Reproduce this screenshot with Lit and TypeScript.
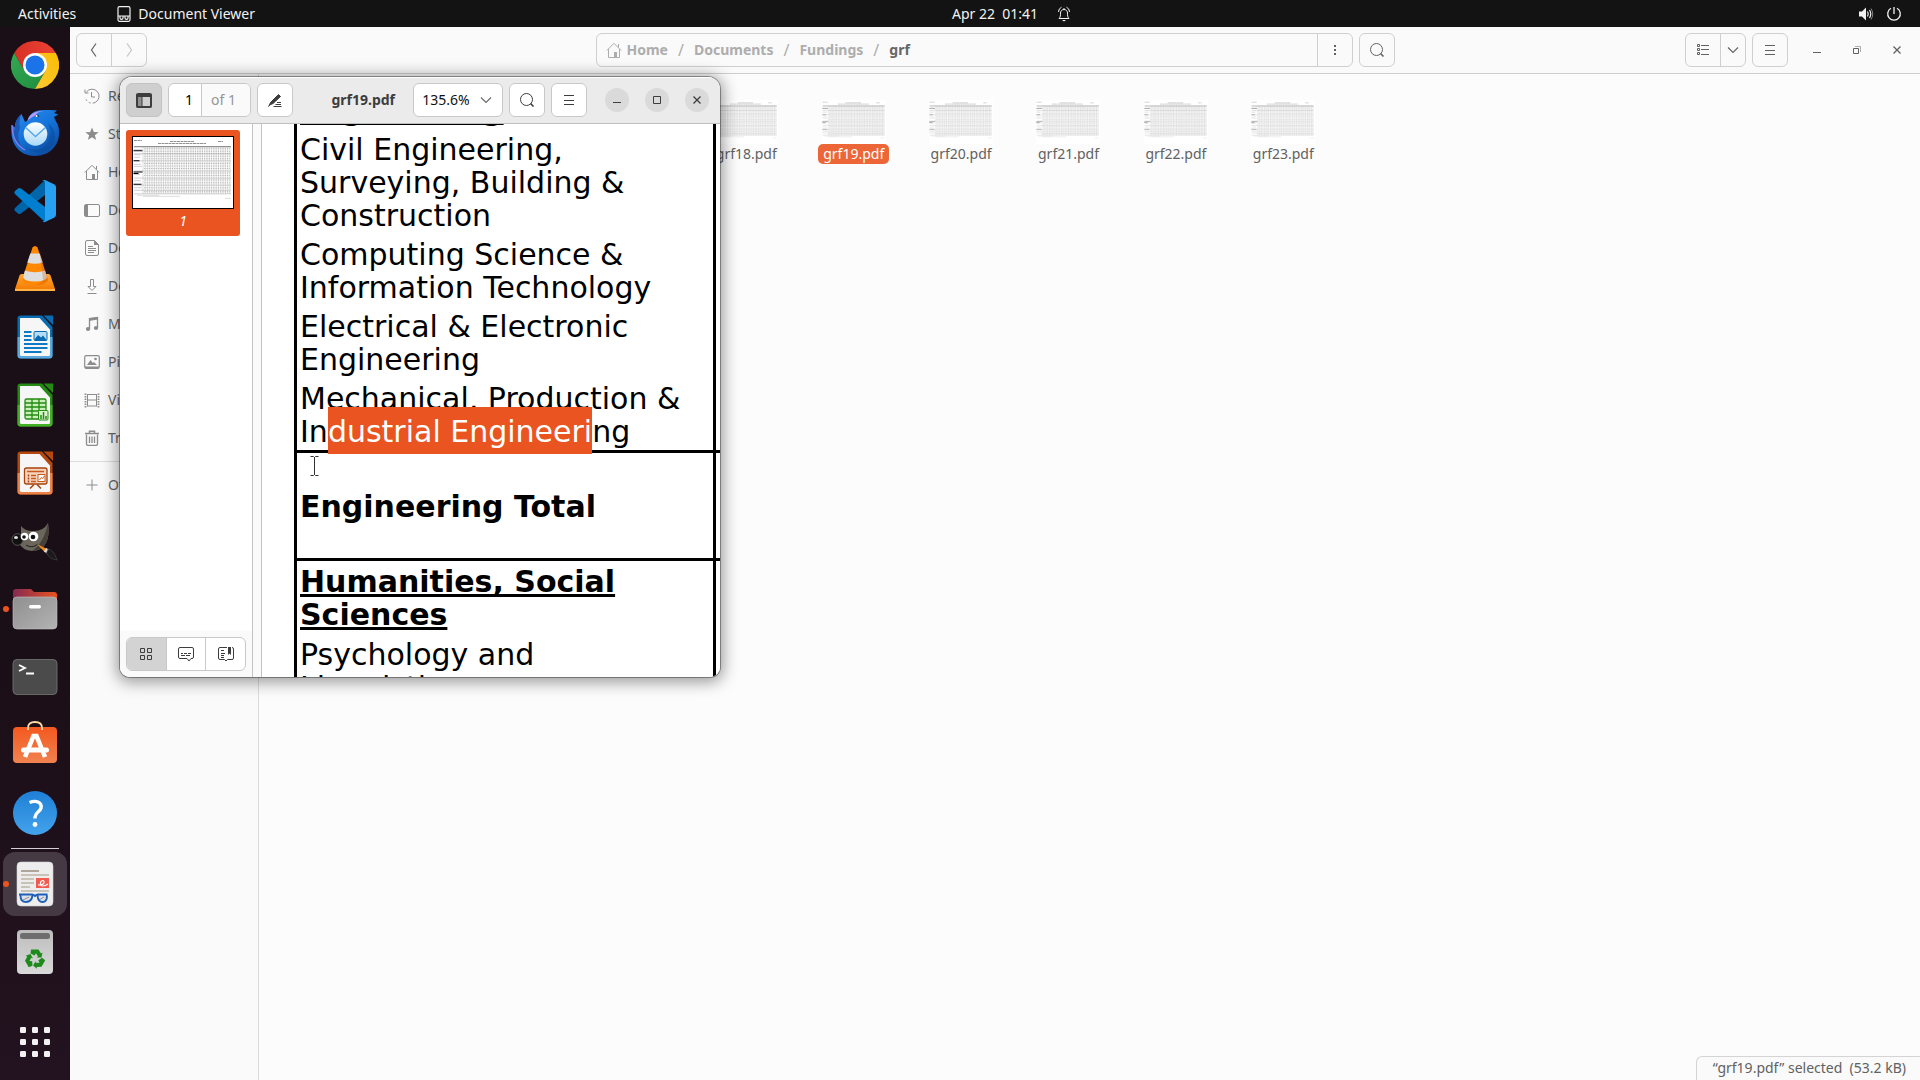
import { LitElement, html, css, svg, nothing, type TemplateResult } from "lit";
import { customElement, state } from "lit/decorators.js";
import { classMap } from "lit/directives/class-map.js";

/* ---------- small symbolic icons, drawn on a 16px grid ---------- */

const glyph = (body: TemplateResult, size = 16) => html`<svg
  class="glyph"
  width=${size}
  height=${size}
  viewBox="0 0 16 16"
  fill="none"
  stroke="currentColor"
  aria-hidden="true"
>${body}</svg>`;

const icons = {
  back: svg`<path d="M10 1.5L5.5 8l4.5 6.5" stroke-width="1.2"/>`,
  forward: svg`<path d="M6 1.5L10.5 8 6 14.5" stroke-width="1.2"/>`,
  down: svg`<path d="M3 5.5l5 5 5-5" stroke-width="1.1"/>`,
  search: svg`<circle cx="7.5" cy="7.5" r="6"/><path d="M11.5 11.5l3 3" stroke-width="1.6"/>`,
  menu: svg`<path d="M3 3.5h10M3 8.5h10M3 12.5h10"/>`,
  dots: svg`<path d="M8 3v2M8 7v2M8 11v2" stroke-width="2"/>`,
  list: svg`<path d="M2.500 2.500h2v2h-2zM2.500 6.500h2v2h-2zM2.500 10.500h2v2h-2zM6 3.500h8M6 7.500h8M6 12.500h8"/>`,
  minimize: svg`<path d="M4 10.5h8"/>`,
  maximize: svg`<path d="M4.5 4.5h7v7h-7z"/>`,
  restore: svg`<path d="M4.5 6.5h5v5h-5z"/><path d="M6 4.5h5.5V10" opacity=".5"/>`,
  close: svg`<path d="M4.5 4.5l7 7M11.5 4.5l-7 7" stroke-width="1.3"/>`,
  recent: svg`<path d="M2.3 4.2a7 7 0 1 1-1.1 5.3" stroke-dasharray="28 2 2 2 2 2"/><path d="M1 1.5v3.5h3.5M7.500 4v5h3.5"/>`,
  star: svg`<path d="M8 1.5l1.8 4.6 4.9.2-3.9 3 1.4 4.7L8 11.3 3.8 14l1.4-4.7-3.9-3 4.9-.2z" fill="currentColor" stroke="none"/>`,
  home: svg`<path d="M.8 8.5L8 1.3l7.2 7.2M2.5 7v8.5h11V7M12.5 2v3.5"/><path d="M8 10h3v5H8z" fill="currentColor" stroke="none"/>`,
  desktop: svg`<rect x=".5" y="2.5" width="15" height="12" rx="1.5"/><path d="M1 3h3v11H1z" fill="currentColor" stroke="none"/>`,
  document: svg`<path d="M3 .5h7.5l4 4v9.5a1.5 1.5 0 0 1-1.5 1.5H3A1.5 1.5 0 0 1 1.5 14V2A1.5 1.5 0 0 1 3 .5z"/><path d="M10 0v5h5z" fill="currentColor" stroke="none"/><path d="M4 6.5h5M4 8.5h8M4 10.5h8M4 12.5h6"/>`,
  download: svg`<path d="M6.5 1.5h3v7h2.5l-4 4-4-4h2.5zM3.500 15.500h9"/>`,
  music: svg`<path d="M5.5 13V2.500l8-1V12" stroke-width="1.3"/><path d="M5 2.5l9-1.5v2.5L5 5z" fill="currentColor" stroke="none"/><ellipse cx="4" cy="13" rx="2.2" ry="1.9" fill="currentColor" stroke="none"/><ellipse cx="12" cy="12" rx="2.2" ry="1.9" fill="currentColor" stroke="none"/>`,
  picture: svg`<rect x=".7" y="1.7" width="14.6" height="12.6" rx="1.5" stroke-width="1.2"/><path d="M3 11l3.5-5L9 9l1-1 3 3z" fill="currentColor" stroke="none"/><circle cx="11.5" cy="5" r="1.3" fill="currentColor" stroke="none"/><path d="M1 13.5h14" stroke-width="2"/>`,
  video: svg`<path d="M3.5 2v12.5M12.5 2v12.5M3.5 2.5h9M3.5 8h9M3.5 14h9"/><path d="M1.5 1.5v14M14.5 1.5v14" stroke-width="1.8" stroke-dasharray="1.5 1"/>`,
  trash: svg`<path d="M2.5 4.5v9.5a1.5 1.5 0 0 0 1.5 1.5h8a1.5 1.5 0 0 0 1.5-1.5V4.500M5.500 6.500v6.500M8 6.500v6.500M10.500 6.500v6.500" stroke-width="1.3"/><path d="M1 3.5h14M5.5 3V1.200h5V3" stroke-width="1.5"/>`,
  plus: svg`<path d="M8 2.5v11M2.5 8h11"/>`,
  pane: svg`<path d="M.5 2h15v13.500H.5z" fill="#3d3d3d" stroke="none"/><path d="M2 5h3.500v9H2z" fill="#909090" stroke="none"/><path d="M6.500 5H14v9H6.500z" fill="#d0d0d0" stroke="none"/><path d="M.5 2.500a1 1 0 0 1 1-1h13a1 1 0 0 1 1 1v12a1 1 0 0 1-1 1h-13a1 1 0 0 1-1-1z"/>`,
  annotate: svg`<path d="M3.500 10.500L11.500 2.500l2 2L6 11.500l-3.500 1.500z" fill="currentColor"/><path d="M1 14.500l2-1.500M10 10.500h4M8.500 12.500h5.500M6.500 14.500h8"/>`,
  tiles: svg`<path d="M2.500 2.500h4v4h-4zM9.500 2.500h4v4h-4zM2.500 9.500h4v4h-4zM9.500 9.500h4v4h-4z"/>`,
  note: svg`<path d="M2 1.500h12A1.500 1.500 0 0 1 15.500 3v8a1.500 1.500 0 0 1-1.500 1.500h-1L11 15l-2-2.500H2A1.500 1.500 0 0 1 .500 11V3A1.500 1.500 0 0 1 2 1.500zM3 7.500h2M6 7.500h3M10 7.500h3M3 9.500h4M8 9.500h4"/>`,
  bookmark: svg`<path d="M9 1.500H2A1.500 1.500 0 0 0 .500 3v9A1.500 1.500 0 0 0 2 13.500h4.500L8 15l1.500-1.500H14a1.500 1.500 0 0 0 1.500-1.500V3A1.500 1.500 0 0 0 14 1.500M3 4.500h3M3 7.500h4M3 9.500h3M3 11.500h3"/><path d="M10 1h3v8l-1.500-1.500L10 9z" fill="currentColor" stroke="none"/>`,
  viewer: svg`<rect x="2" y=".7" width="12" height="14.600" rx="1.500" stroke-width="1.200"/><path d="M2 10h12M4 10.500v1.500q0 1.300 1.500 1.300t1.500-1.300v-1.500M9 10.500v1.500q0 1.300 1.500 1.300T12 12v-1.500" stroke-width="1.200"/>`,
  bell: svg`<path d="M3 12.500c1.500-1.500 1.500-3 1.500-5.500 0-2 1.500-3.500 3.500-3.500s3.500 1.500 3.500 3.500c0 2.500 0 4 1.500 5.500zM2.500 6q0-3.500 3-4.800M13.500 6q0-3.500-3-4.800M8 3.500V2"/><path d="M6 14h4l-2 1.500z" fill="currentColor" stroke="none"/>`,
  volume: svg`<path d="M1 5.500h3L8 1.500v13l-4-4H1z" fill="currentColor" stroke="none"/><path d="M9.500 5.500q1.500 2.500 0 5M11.500 4q2.500 4 0 8" stroke-width="1.200"/><path d="M13 2.500q3.500 5.500 0 11" opacity=".5"/>`,
  power: svg`<path d="M5 2.300a6.300 6.300 0 1 0 6 0M8 1v7" stroke-width="1.300"/>`,
};

/* ---------- full-colour launcher icons, drawn on a 48px grid ---------- */

const officeDoc = (light: string, dark: string, art: TemplateResult) => svg`
  <path d="M9.500 2.500H31L41.500 14v28.500a3 3 0 0 1-3 3h-29a3 3 0 0 1-3-3v-37a3 3 0 0 1 3-3z" fill="${dark}"/>
  <path d="M6.500 24h35v18.500a3 3 0 0 1-3 3h-29a3 3 0 0 1-3-3z" fill="${light}"/>
  <path d="M9.500 5h19L39 16.500v25a1.500 1.500 0 0 1-1.500 1.500h-27A1.500 1.500 0 0 1 9 41.500v-36z" fill="#f6f6f6"/>
  <path d="M32.500 2.500h9.500v9.500z" fill="${dark}"/>
  ${art}`;

const launcherArt: Record<string, TemplateResult> = {
  chrome: svg`
    <defs>
      <linearGradient id="cr" x1="0" x2="1"><stop offset="0" stop-color="#d93025"/><stop offset="1" stop-color="#ea4335"/></linearGradient>
      <linearGradient id="cg" x1="0" y1="0" x2="1" y2="1"><stop offset="0" stop-color="#34a853"/><stop offset="1" stop-color="#1e8e3e"/></linearGradient>
      <linearGradient id="cy" x1="1" y1="0" x2="0" y2="1"><stop offset="0" stop-color="#fbbc04"/><stop offset="1" stop-color="#fcc934"/></linearGradient>
    </defs>
    <path d="M24 12H44.800A24 24 0 0 0 3.200 12L13.600 30z" fill="url(#cr)"/>
    <path d="M34.400 30L24 48A24 24 0 0 1 3.200 12L13.600 30 24 36z" fill="url(#cg)"/>
    <path d="M34.400 30L24 12h20.800A24 24 0 0 1 24 48z" fill="url(#cy)"/>
    <circle cx="24" cy="24" r="12" fill="#fff"/><circle cx="24" cy="24" r="9.500" fill="#1a73e8"/>`,
  thunderbird: svg`
    <defs>
      <linearGradient id="tb" x1="0" y1="0" x2=".6" y2="1"><stop offset="0" stop-color="#2f8df0"/><stop offset=".55" stop-color="#1373d9"/><stop offset="1" stop-color="#0d4fa5"/></linearGradient>
      <linearGradient id="te" x1="0" y1="0" x2="0" y2="1"><stop offset="0" stop-color="#fff"/><stop offset="1" stop-color="#a9d8f8"/></linearGradient>
    </defs>
    <path d="M10.500 5C6 9 3.500 14 4 18.500L1 16C-2 33 7 47 24 47c15 0 25-11 24-25-.3-4-1-7-3-9.500L43 8l4.500-2.500L43 4l3-2.500C40 .5 36 1 32 1 24 1 18 5 16.500 11.500L14 13C13 10 11.500 8 10.500 5z" fill="url(#tb)"/>
    <path d="M10.500 5C8 10 8 15 9 19c-3 6-2 15 3 20-9-4-11-13-8-20C4 13 6 8.500 10.500 5z" fill="#1b57b5"/>
    <path d="M1 16c0 11 4 20 13 25" fill="none" stroke="#8c7de8" stroke-width="1.300"/>
    <path d="M16.500 12C18 5 25 1.500 32 2c-6 1-7 3-7 5-3 0-6 2-8.500 5z" fill="#b79af5"/>
    <path d="M13 36c5 6 17 6 22 0s6-15 2-22c8 6 9 17 3 24s-20 8-27-2z" fill="#0a4c9f" opacity=".55"/>
    <circle cx="24.500" cy="25" r="11.800" fill="url(#te)"/>
    <path d="M14.500 18.500l10 9 10-9" fill="none" stroke="#5aa8e8" stroke-width="1.500"/>
    <path d="M24 7.500q2-2 4 0" fill="none" stroke="#0a3c80" stroke-width="1.200"/><circle cx="25.500" cy="7" r="1" fill="#fff"/>`,
  code: svg`
    <path d="M34 3L4 31q-1.500 1.500 0 3l3 2.500q1.300 1 3 0L34 18z" fill="#0065a9"/>
    <path d="M34 45L4 17q-1.500-1.500 0-3l3-2.500q1.300-1 3 0L34 30z" fill="#007fd0"/>
    <path d="M34 3l9 4.300q2 1 2 3v27.400q0 2-2 3L34 45q-1 .5-3-1 3 1 3-1.500V5.500Q34 3 31 4q2-1.500 3-1z" fill="#26a1f4"/>`,
  vlc: svg`
    <defs><linearGradient id="vb" x1="0" y1="0" x2="0" y2="1"><stop offset="0" stop-color="#ffa733"/><stop offset="1" stop-color="#f57900"/></linearGradient></defs>
    <path d="M10.500 29h27q1.500 0 2 1.500L44 44q.3 2-1.500 2h-37Q3.700 46 4 44l4.500-13.500Q9 29 10.500 29z" fill="url(#vb)"/>
    <path d="M4 44h40v2H4z" fill="#ffb347"/>
    <path d="M21.500 2.500Q24-.5 26.500 2.500L37 35q-2 5-13 5T11 35z" fill="#ff8800"/>
    <path d="M19.300 8.500h9.400l3 9q-7.700 2.500-15.400 0zM14 25.500q10 3.500 20 0l2 7q-2 4-12 4t-12-4z" fill="#dedede"/>
    <path d="M28 3l9 32q-2 5-13 5 8-2 8-6z" fill="#b34700" opacity=".25"/>`,
  writer: officeDoc("#5aa9dc", "#0a6cb0", svg`
    <path d="M13 19h7.500M13 23h7.500M13 27h7.500M13 31h23.500M13 35h23.500M13 39h17.500" stroke="#0a7bc4" stroke-width="1.800"/>
    <rect x="23" y="18.500" width="13" height="9" rx="1" fill="#b5dcf5" stroke="#0a6cb0"/><path d="M23 27l4-5 3 2.500 2-2 4 5z" fill="#0a6cb0"/>`),
  calc: officeDoc("#43b028", "#238a12", svg`
    <rect x="14" y="18" width="21" height="20" rx="1.500" fill="#c8f0b8" stroke="#238a12" stroke-width="1.300"/>
    <path d="M14 22h21M14 26h21M14 30h21M14 34h21M21 18v20M28 18v20" stroke="#238a12" stroke-width="1.300"/>
    <rect x="27.500" y="29.500" width="9.500" height="9.500" rx="1" fill="#d8f5cc" stroke="#238a12"/><path d="M30 38v-4M32.500 38v-7M35 38v-3" stroke="#238a12" stroke-width="1.500"/>`),
  impress: officeDoc("#ec8149", "#b4480f", svg`
    <rect x="13.500" y="19" width="22.500" height="16" rx="2" fill="#f8d4bf" stroke="#a8430f" stroke-width="1.300"/>
    <path d="M16 22.500h17M20 26.500h5M20 29.500h5M20 32.500h5" stroke="#c65a1c" stroke-width="1.500"/><path d="M17.500 25.500v8" stroke="#a8430f" stroke-width="1.500" stroke-dasharray="2 1"/>
    <rect x="27" y="25.500" width="7" height="7" fill="#fff" stroke="#c65a1c"/><path d="M28.500 31l2-2.500 1 1 2-2.500" fill="none" stroke="#c65a1c"/>
    <path d="M19 39.500l4-4M30 39.500l-4-4" stroke="#a8430f" stroke-width="1.500"/>`),
  gimp: svg`
    <path d="M10 9q4 5 11 5 11 1 16-8 2 12-2 20-4 8-14 8-10-1-13-8 1-2 2-7z" fill="#6b665c"/>
    <path d="M37 6q2 12-2 20-4 8-14 8 12-8 16-28z" fill="#45413a"/>
    <ellipse cx="6.500" cy="22.500" rx="5.500" ry="5.800" fill="#111" stroke="#555"/><ellipse cx="5" cy="20.500" rx="2" ry="1.500" fill="#ddd"/>
    <circle cx="13.500" cy="19.500" r="3.800" fill="#fff"/><circle cx="22.500" cy="19.500" r="4.800" fill="#fff"/><circle cx="13" cy="20" r="1.800" fill="#111"/><circle cx="22" cy="20" r="2.300" fill="#111"/>
    <path d="M15 28q6 4 12-1" fill="none" stroke="#222"/>
    <path d="M26 27l10 5-2 3.500z" fill="#ef8a1c"/><path d="M35 31l3 1.500-2 4-3-2z" fill="#ddd"/><path d="M37 32q6 1 9 11-8-1-10.500-7z" fill="#1a1a1a" stroke="#555" stroke-width=".5"/>`,
  files: svg`
    <defs><linearGradient id="ff" x1="0" x2="1"><stop offset="0" stop-color="#842a52"/><stop offset="1" stop-color="#e95420"/></linearGradient>
    <linearGradient id="fg" x1="0" y1="0" x2="1" y2="1"><stop offset="0" stop-color="#8f8f8f"/><stop offset="1" stop-color="#b3b3b3"/></linearGradient></defs>
    <path d="M2 7a3 3 0 0 1 3-3h15l3 3h20a3 3 0 0 1 3 3v8H2z" fill="url(#ff)"/>
    <rect x="2" y="12" width="44" height="32" rx="4" fill="url(#fg)" stroke="#c4c4c4" stroke-width=".6"/>
    <rect x="18" y="20" width="12" height="3.500" rx="1.700" fill="#fff"/>`,
  terminal: svg`<rect x="2" y="6.500" width="44" height="35" rx="4" fill="#4b4b4b" stroke="#777" stroke-width=".8"/>
    <path d="M8 12l6 3-6 3M15 20.500h8" fill="none" stroke="#fff" stroke-width="1.800"/>`,
  software: svg`
    <defs><linearGradient id="sw" x1="0" y1="0" x2="0" y2="1"><stop offset="0" stop-color="#f4581f"/><stop offset="1" stop-color="#f08350"/></linearGradient></defs>
    <rect x="2" y="6" width="44" height="36" rx="4" fill="url(#sw)"/>
    <path d="M17 9V7q0-6 7-6t7 6v2" fill="none" stroke="#fbd9a4" stroke-width="1.800"/>
    <path d="M14 36l8.500-21h3L34 36" fill="none" stroke="#fff" stroke-width="4.600"/><rect x="10" y="26.500" width="28" height="5" rx="2.500" fill="#fff"/>`,
  help: svg`
    <defs><linearGradient id="hp" x1="0" y1="0" x2="0" y2="1"><stop offset="0" stop-color="#1f7fd6"/><stop offset="1" stop-color="#43a3ec"/></linearGradient></defs>
    <circle cx="24" cy="24" r="22" fill="url(#hp)"/>
    <path d="M18.500 13.500q5-2 8.500-.5 4 2 3 6-.5 2-3 4t-3 5v1.500" fill="none" stroke="#fff" stroke-width="3.400"/><circle cx="24" cy="35.500" r="2.400" fill="#fff"/>`,
  evince: svg`
    <rect x="6" y="2" width="36" height="44" rx="4" fill="#ededed" stroke="#d5d5d5" stroke-width=".6"/>
    <path d="M10 11h18" stroke="#a89f92" stroke-width="1.800"/><path d="M10 15h28M10 19h13M10 23h13M10 27h9M10 31h28" stroke="#c9c3b7" stroke-width="1.800"/>
    <rect x="25" y="18" width="13" height="10" fill="#f15b50"/><path d="M27 25q7 0 6-3.500-1-2-3 0-2 4 1.500 4.500 3 0 5.500-2" fill="none" stroke="#fff" stroke-width="1.200"/>
    <path d="M10.500 35h10q0 6-5 6T10.500 35zM26.500 35h9q-.5 6-4.500 6T26.500 35z" fill="#d9dee6" fill-opacity=".8"/>
    <path d="M12 40l6-3M28 40l5-3" stroke="#777" stroke-width=".8"/>
    <path d="M8 34.500h13q1.500 0 3 1.500 1.500-1.500 3-1.500h9.500M9.500 35.500q0 6.500 5.500 6.500t6.500-6.500M26.500 35.500q.5 6.500 5 6.500t4.500-6.500" fill="none" stroke="#1f5fb8" stroke-width="1.900"/>`,
  bin: svg`
    <defs><linearGradient id="bn" x1="0" y1="0" x2="0" y2="1"><stop offset="0" stop-color="#bdbdbd"/><stop offset="1" stop-color="#d9d9d9"/></linearGradient></defs>
    <rect x="6" y="2" width="36" height="44" rx="4" fill="url(#bn)"/><rect x="9" y="5" width="30" height="6" rx="2.500" fill="#6e6e6e"/>
    <g fill="#1f8a1c"><path d="M20 21.500h7.500l2.500 4 1.500-1-1 5h-5l1.500-1-2-3.300-1.500 2.300-4-2z"/>
    <path d="M20 21.500h7.500l2.500 4 1.500-1-1 5h-5l1.500-1-2-3.300-1.500 2.300-4-2z" transform="rotate(120 24 31)"/>
    <path d="M20 21.500h7.500l2.500 4 1.500-1-1 5h-5l1.500-1-2-3.300-1.500 2.300-4-2z" transform="rotate(240 24 31)"/></g>`,
  apps: svg`${[9, 21, 33].map((y) => [9, 21, 33].map((x) => svg`<rect x="${x}" y="${y}" width="6" height="6" rx="1.200" fill="#f2f2f2"/>`))}`,
};

interface Launcher { id: string; label: string; running?: boolean; active?: boolean }

const launchers: Launcher[] = [
  { id: "chrome", label: "Google Chrome" },
  { id: "thunderbird", label: "Thunderbird Mail" },
  { id: "code", label: "Visual Studio Code" },
  { id: "vlc", label: "VLC media player" },
  { id: "writer", label: "LibreOffice Writer" },
  { id: "calc", label: "LibreOffice Calc" },
  { id: "impress", label: "LibreOffice Impress" },
  { id: "gimp", label: "GIMP" },
  { id: "files", label: "Files", running: true },
  { id: "terminal", label: "Terminal" },
  { id: "software", label: "Ubuntu Software" },
  { id: "help", label: "Help" },
];

const places: [TemplateResult, string][] = [
  [icons.recent, "Recent"],
  [icons.star, "Starred"],
  [icons.home, "Home"],
  [icons.desktop, "Desktop"],
  [icons.document, "Documents"],
  [icons.download, "Downloads"],
  [icons.music, "Music"],
  [icons.picture, "Pictures"],
  [icons.video, "Videos"],
  [icons.trash, "Trash"],
];

const files = [14, 15, 16, 17, 18, 19, 20, 21, 22, 23].map((n) => `grf${n}.pdf`);

/* A landscape page holding one dense table, as seen from far away. */
const pageThumb = (cls: string, ink: string, cols: number) => {
  const step = 87 / cols;
  const xs = Array.from({ length: cols + 1 }, (_, i) => 10 + i * step);
  return html`<svg class=${cls} viewBox="0 0 100 70" preserveAspectRatio="none" aria-hidden="true">
    <rect width="100" height="70" fill="#fff"/>
    <path d="M1 3.500h8M37 4.500h24M25 6.500h48M85 4.500h5" stroke=${ink} stroke-width="1" stroke-dasharray="3 .5"/>
    <path d="M1 9.500h97" stroke=${ink} stroke-width="1.400"/>
    ${svg`<path d="${xs.map((x) => `M${x} 9v47`).join("")}" stroke="${ink}" stroke-width=".5" opacity=".6"/>`}
    ${svg`<path d="${[11.5, 14, 16.5, 19, 21.5, 26, 28.5, 31, 35.5, 38, 42.5, 45, 50, 54].map((y) => `M11 ${y}h86`).join("")}" stroke="${ink}" stroke-width="1" stroke-dasharray="1.400 .900" opacity=".5"/>`}
    <path d="M1 16.500h97M1 23.500h97M1 33.500h97M1 40.500h97M1 47.500h97M1 52.500h97M1 56h97" stroke=${ink} stroke-width=".6" opacity=".7"/>
    <path d="M1 12.500h8M1 17.500h7M1 20h6M1 27h7M1 29h8M1 37h6M1 43h7M1 50h8" stroke=${ink} stroke-width=".8" opacity=".5"/>
    <path d="M4 57.500h22M10 58.500h37M92 60.500h6" stroke=${ink} stroke-width=".6" opacity=".5"/>
    <path class="marks" d="M.5 13.500h9M.5 23.500h6M.5 34.500h9M.5 36h5M.5 46.500h8"/>
  </svg>`;
};

@customElement("app-root")
export class AppRoot extends LitElement {
  @state() private selected = "grf19.pdf";
  @state() private page = "1";

  static styles = css`
    :host {
      display: block;
      font-family: "Noto Sans", "Open Sans", sans-serif;
      font-size: 14px;
      line-height: 20px;
      color: #3d3d3d;
    }
    * { box-sizing: border-box; }
    button, input {
      font: inherit;
      color: inherit;
      margin: 0;
      padding: 0;
      border: 0;
      background: none;
    }
    button { display: flex; align-items: center; justify-content: center; }
    .glyph { display: block; flex: none; }
    .desktop {
      position: relative;
      display: grid;
      grid-template: 27px 1fr / 70px 1fr;
      min-height: 100vh;
      overflow: hidden;
    }

    /* top panel */
    .panel {
      grid-column: 1 / -1;
      display: grid;
      grid-template-columns: 1fr auto 1fr;
      align-items: center;
      padding: 0 18px;
      background: #131313;
      color: #f2f2f2;
    }
    .panel-group { display: flex; align-items: center; gap: 6px; }
    .activities { margin-right: 34px; }
    .clock { gap: 18px; padding-left: 104px; }
    .time { white-space: pre; }
    .tray { justify-content: flex-end; gap: 12px; }

    /* dock */
    .dock {
      display: flex;
      flex-direction: column;
      align-items: center;
      padding: 6px 0;
      background: linear-gradient(#1a0f17, #1b0f17 60%, #23121f);
    }
    .apps { display: flex; flex-direction: column; gap: 4px; }
    .launcher { position: relative; width: 64px; height: 64px; border-radius: 12px; }
    .launcher.active { background: #453a43; }
    .launcher.running::before {
      content: "";
      position: absolute;
      left: 0;
      top: 29px;
      width: 6px;
      height: 6px;
      border-radius: 50%;
      background: #e95420;
    }
    .divider { width: 48px; height: 1px; margin: 3px 0; border: 0; background: #d5d0d3; }
    .launcher.grid { margin-top: auto; }

    /* file manager */
    .files {
      position: relative;
      display: grid;
      grid-template: 47px 1fr / 189px 1fr;
      background: #fcfcfc;
      color: #616161;
    }
    .files-bar {
      grid-column: 1 / -1;
      display: grid;
      grid-template-columns: 1fr minmax(0, 799px) 1fr;
      align-items: center;
      gap: 6px;
      padding: 0 6px;
      background: #fafafa;
      border-bottom: 1px solid #cfcfcf;
    }
    .cluster { display: flex; align-items: center; gap: 6px; }
    .cluster.end { justify-content: flex-end; }
    .controls { display: flex; gap: 6px; padding-left: 6px; }
    .box {
      display: flex;
      height: 34px;
      border: 1px solid #cfcfcf;
      border-radius: 6px;
      overflow: hidden;
    }
    .box > button { width: 34px; }
    .box > button + button, .box > .more { width: 35px; border-left: 1px solid #cfcfcf; }
    .box > button.slim { width: 25px; }
    .box > button:disabled { color: #c4c4c4; }
    .path { flex: 1; min-width: 0; }
    .crumbs {
      flex: 1;
      display: flex;
      align-items: center;
      gap: 10px;
      padding: 0 9px;
      font-weight: 700;
      color: #adadad;
    }
    .crumbs a { display: flex; align-items: center; gap: 5px; color: inherit; text-decoration: none; }
    .crumbs a.here { color: #666; }
    .slash { font-weight: 400; font-size: 16px; }
    .win { width: 34px; height: 34px; }

    .places {
      padding-top: 3px;
      background: #fafafa;
      border-right: 1px solid #dcdcdc;
    }
    .place {
      display: flex;
      align-items: center;
      gap: 8px;
      height: 38px;
      padding: 0 14px;
      color: #666;
      text-decoration: none;
    }
    .place .glyph { color: #8c8c8c; }
    .rule { height: 1px; margin: 4px 0; border: 0; background: #dcdcdc; }

    .listing {
      display: grid;
      grid-template-columns: repeat(auto-fill, minmax(101px, 1fr));
      align-content: start;
      padding: 26px 46px 0 4px;
    }
    .file { flex-direction: column; }
    .file-thumb { width: 64px; height: 44px; }
    .marks { fill: none; stroke: #8a8a8a; stroke-width: 1; }
    .name { padding: 0 5px; border-radius: 5px; }
    .file.selected .name { background: #ec6637; color: #fff; }
    .status {
      position: absolute;
      right: 0;
      bottom: 0;
      padding: 1px 14px 2px 16px;
      background: #fafafa;
      border: 1px solid #d4d4d4;
      border-width: 1px 0 0 1px;
      border-top-left-radius: 6px;
      white-space: pre;
    }

    /* document viewer, floating over the desktop */
    .viewer {
      position: absolute;
      left: 120px;
      top: 77px;
      width: 600px;
      height: 600px;
      display: grid;
      grid-template: 47px 1fr / 133px 1fr;
      background: #fafafa;
      border-radius: 12px 12px 10px 10px;
      box-shadow: 0 0 0 1px rgba(0, 0, 0, 0.35), 0 2px 16px 3px rgba(0, 0, 0, 0.4);
      overflow: hidden;
    }
    .viewer-bar {
      grid-column: 1 / -1;
      display: flex;
      align-items: center;
      gap: 6px;
      padding: 0 6px;
      background: #ebebeb;
      border-bottom: 1px solid #bfbfbf;
      box-shadow: inset 0 1px #fff;
    }
    .viewer .box { background: #fff; border-color: #c8c8c8; }
    .viewer .box.pressed { background: #cfcfcf; border-color: #c3c3c3; }
    .page-no { width: 32px; padding-right: 8px; text-align: right; color: #000; }
    .page-of { padding: 6px 14px 0 9px; border-left: 1px solid #c8c8c8; background: #fafafa; color: #969696; }
    .title { flex: 1; margin: 0; padding-right: 12px; font-size: 14px; text-align: right; }
    .viewer .box > button.zoom { width: 88px; gap: 8px; color: #111; }
    .zoom .glyph { color: #666; }
    .winset { display: flex; gap: 16px; padding: 0 5px 0 12px; }
    .round { width: 24px; height: 24px; border-radius: 50%; background: #dadada; }

    .thumbs { display: flex; flex-direction: column; border-right: 1px solid #c3c3c3; background: #fff; }
    .thumb-list { flex: 1; padding: 6px; }
    .thumb {
      flex-direction: column;
      gap: 2px;
      width: 114px;
      height: 106px;
      border-radius: 3px;
      background: #e95420;
      color: #fff;
      font-style: italic;
    }
    .page-thumb { width: 102px; height: 73px; border: 1px solid #000; }
    .page-thumb .marks { stroke: #000; }
    .modes { padding: 6px; background: #fafafa; }
    .modes .box { width: 120px; }
    .viewer .modes .box > button { flex: 1; width: auto; border-color: #c8c8c8; }
    .modes .on { background: #d3d3d3; }

    .canvas { padding-left: 8px; overflow: hidden; }
    .sheet { height: 100%; padding-left: 32px; border-left: 1px solid #c3c3c3; background: #fff; overflow: hidden; }
    .funding {
      width: 426px;
      margin-top: -35px;
      border-spacing: 0;
      font: 30px/33px "DejaVu Sans", sans-serif;
      color: #000;
    }
    .funding td, .funding th { padding: 4px 0 2px; text-align: left; vertical-align: middle; white-space: nowrap; }
    .funding th { padding-bottom: 3px; font-weight: 700; }
    .funding .subject { width: 422px; padding-left: 3px; border: solid #000; border-width: 0 3px; }
    .closed > * { border-bottom: 3px solid #000 !important; }
    .total > .subject { height: 108px; }
    .section { text-decoration: underline; text-decoration-thickness: 3px; text-underline-offset: 2px; text-decoration-skip-ink: none; }
    .picked { padding: 7px 0 5px; background: #e95420; color: #fff; }

    .pointer { position: absolute; left: 309px; top: 454px; }
  `;

  private launcher(l: Launcher, extra = "") {
    const cls = { launcher: true, running: !!l.running, active: !!l.active, grid: extra === "grid" };
    return html`<button class=${classMap(cls)} aria-label=${l.label}>
      <svg width="48" height="48" viewBox="0 0 48 48" aria-hidden="true">${launcherArt[l.id]}</svg>
    </button>`;
  }

  private renderPanel() {
    return html`<header class="panel">
      <div class="panel-group">
        <button class="activities">Activities</button>
        ${glyph(icons.viewer)}<span>Document Viewer</span>
      </div>
      <div class="panel-group clock"><time class="time">Apr 22  01:41</time>${glyph(icons.bell)}</div>
      <div class="panel-group tray">${glyph(icons.volume)}${glyph(icons.power)}</div>
    </header>`;
  }

  private renderDock() {
    return html`<nav class="dock" aria-label="Dock">
      <div class="apps">${launchers.map((l) => this.launcher(l))}</div>
      <hr class="divider" />
      <div class="apps">
        ${this.launcher({ id: "evince", label: "Document Viewer", running: true, active: true })}
        ${this.launcher({ id: "bin", label: "Trash" })}
      </div>
      ${this.launcher({ id: "apps", label: "Show Applications" }, "grid")}
    </nav>`;
  }

  private renderFiles() {
    return html`<main class="files">
      <div class="files-bar">
        <div class="cluster">
          <div class="box">
            <button aria-label="Back">${glyph(icons.back)}</button>
            <button aria-label="Forward" disabled>${glyph(icons.forward)}</button>
          </div>
        </div>
        <div class="cluster">
          <div class="box path">
            <nav class="crumbs" aria-label="Path">
              <a href="#home">${glyph(icons.home)}Home</a><span class="slash">/</span>
              <a href="#documents">Documents</a><span class="slash">/</span>
              <a href="#fundings">Fundings</a><span class="slash">/</span>
              <a class="here" href="#grf">grf</a>
            </nav>
            <button class="more" aria-label="Folder menu">${glyph(icons.dots)}</button>
          </div>
          <div class="box"><button aria-label="Search">${glyph(icons.search)}</button></div>
        </div>
        <div class="cluster end">
          <div class="box">
            <button aria-label="List view">${glyph(icons.list)}</button>
            <button class="slim" aria-label="View options">${glyph(icons.down)}</button>
          </div>
          <div class="box"><button aria-label="Menu">${glyph(icons.menu)}</button></div>
          <div class="controls">
            <button class="win" aria-label="Minimize">${glyph(icons.minimize)}</button>
            <button class="win" aria-label="Restore">${glyph(icons.restore)}</button>
            <button class="win" aria-label="Close">${glyph(icons.close)}</button>
          </div>
        </div>
      </div>
      <nav class="places" aria-label="Places">
        ${places.map(([icon, label]) => html`<a class="place" href="#${label.toLowerCase()}">${glyph(icon)}${label}</a>`)}
        <hr class="rule" />
        <a class="place" href="#other">${glyph(icons.plus)}Other Locations</a>
      </nav>
      <div class="listing">
        ${files.map(
          (f, i) => html`<button
            class=${classMap({ file: true, selected: f === this.selected })}
            @click=${() => (this.selected = f)}
          >
            ${pageThumb("file-thumb", "#b0b0b0", 30 + (i % 3) * 2)}<span class="name">${f}</span>
          </button>`,
        )}
      </div>
      ${this.selected
        ? html`<div class="status" role="status">“${this.selected}” selected  (53.2 kB)</div>`
        : nothing}
    </main>`;
  }

  private row(lines: (string | TemplateResult)[], cls = "") {
    return html`<tr class=${cls}>
      <td class="subject">${lines.map((l, i) => (i ? html`<br />${l}` : l))}</td>
      <td></td>
    </tr>`;
  }

  private renderViewer() {
    return html`<section class="viewer" aria-label="grf19.pdf">
      <div class="viewer-bar">
        <div class="box pressed"><button aria-label="Side pane">${glyph(icons.pane)}</button></div>
        <label class="box">
          <input
            class="page-no"
            aria-label="Page"
            .value=${this.page}
            @change=${(e: Event) => (this.page = (e.target as HTMLInputElement).value)}
          />
          <span class="page-of">of 1</span>
        </label>
        <div class="box"><button aria-label="Annotate">${glyph(icons.annotate)}</button></div>
        <h1 class="title">grf19.pdf</h1>
        <div class="box"><button class="zoom">135.6%${glyph(icons.down)}</button></div>
        <div class="box"><button aria-label="Find">${glyph(icons.search)}</button></div>
        <div class="box"><button aria-label="Menu">${glyph(icons.menu)}</button></div>
        <div class="winset">
          <button class="round" aria-label="Minimize">${glyph(icons.minimize)}</button>
          <button class="round" aria-label="Maximize">${glyph(icons.maximize)}</button>
          <button class="round" aria-label="Close">${glyph(icons.close)}</button>
        </div>
      </div>
      <aside class="thumbs">
        <div class="thumb-list">
          <button class="thumb">${pageThumb("page-thumb", "#929292", 38)}<span>1</span></button>
        </div>
        <div class="modes">
          <div class="box">
            <button class="on" aria-label="Thumbnails">${glyph(icons.tiles)}</button>
            <button aria-label="Annotations">${glyph(icons.note)}</button>
            <button aria-label="Bookmarks">${glyph(icons.bookmark)}</button>
          </div>
        </div>
      </aside>
      <div class="canvas">
        <div class="sheet">
          <table class="funding">
            <tbody>
              <tr><th class="subject" scope="row"><span class="section">Engineering</span></th><td></td></tr>
              ${this.row(["Civil Engineering,", "Surveying, Building &", "Construction"])}
              ${this.row(["Computing Science &", "Information Technology"])}
              ${this.row(["Electrical & Electronic", "Engineering"])}
              ${this.row(["Mechanical, Production &", html`In<span class="picked">dustrial Engineeri</span>ng`], "closed")}
              <tr class="closed total"><th class="subject" scope="row">Engineering Total</th><td></td></tr>
              <tr>
                <th class="subject" scope="row"><span class="section">Humanities, Social<br />Sciences</span></th>
                <td></td>
              </tr>
              ${this.row(["Psychology and", "Linguistics"])}
            </tbody>
          </table>
        </div>
      </div>
    </section>`;
  }

  render() {
    return html`<div class="desktop">
      ${this.renderPanel()} ${this.renderDock()} ${this.renderFiles()} ${this.renderViewer()}
      <svg class="pointer" width="11" height="24" viewBox="0 0 11 24" fill="none" aria-hidden="true">
        <path d="M1 2.500h3.500l1 1 1-1H10M5.500 3v18M1 21.500h3.500l1-1 1 1H10" stroke="#fff" stroke-width="3"/>
        <path d="M1.500 2.500h3l1 1 1-1h3M5.500 3v18M1.500 21.500h3l1-1 1 1h3" stroke="#333"/>
      </svg>
    </div>`;
  }
}
